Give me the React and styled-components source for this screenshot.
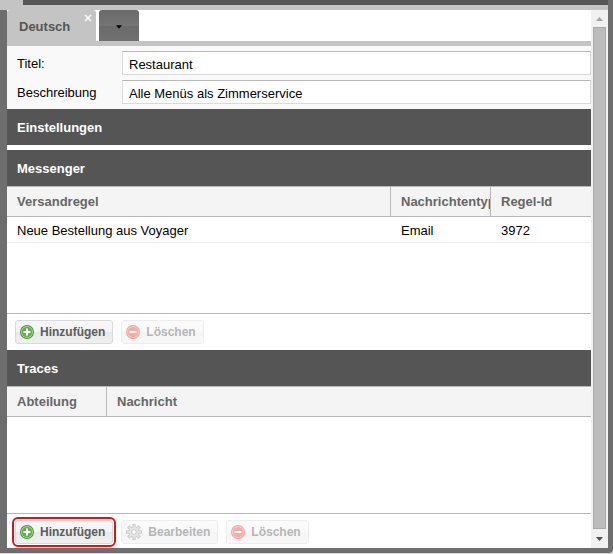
import React, { useState } from 'react'
import styled, { createGlobalStyle } from 'styled-components'

const GlobalStyle = createGlobalStyle`
  * { box-sizing:border-box }
  body {
    margin:0;
    background:#c4c4c4;
    color:#000;
    font:13px/16px "Liberation Sans", Arial, sans-serif;
  }
  button, input { font:inherit }
`

const Frame = styled.div`
  display:flex;
  min-height:100vh;
  padding-bottom:1px;
  background:#d6d6d6;
`
const LeftSide = styled.div`
  display:flex; flex:1; flex-direction:column;
  min-width:0;
`
const TopBar = styled.div`
  height:10px;
  border-bottom:5px solid #c4c4c4;
  border-left:23px solid #c4c4c4;
  background:#555;
`
const Window = styled.div`
  display:flex; flex:1;
  border-left:7px solid #6e6e6e;
  border-bottom:5px solid #6e6e6e;
`
const RightEdge = styled.div`
  width:5px;
  border-radius:0 0 4px 0;
  background:#6e6e6e;
`
const Content = styled.main`
  flex:1;
  min-width:0;
  background:#fff;
`

const TabBar = styled.div`
  display:flex;
  gap:3px;
  height:36px;
  border-bottom:5px solid #c4c4c4;
`
const Tab = styled.div`
  display:flex;
  width:89px; height:36px;
  border-radius:3px 3px 0 0;
  background:#c4c4c4;
`
const TabLabel = styled.button`
  flex:1;
  padding:0 0 3px 12px;
  border:0;
  background:none;
  color:#555;
  font-weight:bold;
  text-align:left;
`
const TabClose = styled.button`
  display:flex;
  align-self:flex-start;
  padding:4px 4px 0 0;
  border:0;
  background:none;
  color:#fff;
`
const TabMenu = styled.button`
  display:flex; align-items:center; justify-content:center;
  width:40px; height:31px;
  padding:2px 0 0;
  border:0;
  border-radius:3px 3px 0 0;
  background:linear-gradient(#6a6a6a, #757575 50%, #6b6b6b 51%, #707070);
`

const Form = styled.form`
  display:grid;
  grid-template-columns:105px 1fr;
  row-gap:5px;
  align-items:center;
  padding:5px 0 5px 10px;
  background:#f9f9f9;
`
const Label = styled.label`
  padding-top:2px;
`
const TextInput = styled.input`
  width:100%; height:24px;
  padding:3px 6px 0;
  border:1px solid #d9d9d9;
  border-top-color:#b9b9b9;
  border-radius:0;
  background:#fff;
  color:#000;
  outline:0;
`

const Panel = styled.section`
  margin-bottom:${({ $spaced }) => $spaced ? '5px' : '0'};
`
const PanelTitle = styled.h2`
  margin:0;
  padding:11px 10px 9px;
  background:#555;
  color:#fff;
  font-size:13px; line-height:16px;
`
const ListArea = styled.div`
  min-height:128px;
  border-bottom:1px solid #b9b9b9;
`
const Table = styled.table`
  width:100%;
  border-collapse:separate; border-spacing:0;
  table-layout:fixed;
  text-align:left;
`
const HeadCell = styled.th`
  width:${({ $width }) => $width || 'auto'};
  height:31px;
  padding:0 0 0 10px;
  border:solid #b9b9b9;
  border-width:1px 1px 1px 0;
  background:#f4f4f4;
  color:#666;
  overflow:hidden;
  white-space:nowrap;
  &:last-child { border-right:0 }
`
const Cell = styled.td`
  height:26px;
  padding:2px 0 0 10px;
  border-bottom:1px solid #ededed;
  white-space:nowrap;
`

const Toolbar = styled.div`
  display:flex;
  gap:8px;
  padding:6px 8px ${({ $bottom }) => $bottom || '6px'};
`
const ToolButton = styled.button`
  display:flex; align-items:center;
  gap:6px;
  height:24px;
  padding:0 7px 0 4px;
  border:1px solid #d9d9d9;
  border-radius:3px;
  background:linear-gradient(#f8f8f8, #f3f3f3 50%, #e9e9e9 51%, #f0f0f0);
  color:#5c5c5c;
  font-size:12px; font-weight:bold; line-height:14px;
  outline:${({ $marked }) => $marked ? '2px solid #d9141e' : '0'};
  outline-offset:1px;
  &:disabled { opacity:0.45 }
`

const ScrollBar = styled.div`
  display:flex; flex-direction:column;
  width:17px;
  background:#f1f1f1;
`
const ScrollButton = styled.button`
  display:flex; align-items:center; justify-content:center;
  height:${({ $height }) => $height};
  padding:0;
  border:0;
  background:none;
`
const ScrollThumb = styled.div`
  flex:1;
  margin:0 2px;
  border:1px solid #a8a8a8;
  background:#bcbcbc;
`

const Arrow = ({ up, color, size = 7 }) => (
  <svg width={size} height="4" viewBox="0 0 7 4" fill={color} aria-hidden="true">
    <path d={up ? 'M0 4h7L3.5 0z' : 'M0 0h7L3.5 4z'} />
  </svg>
)

const RoundIcon = ({ plus }) => (
  <svg width="14" height="14" viewBox="0 0 14 14" aria-hidden="true">
    <circle cx="7" cy="7" r="7" fill={plus ? '#4b8f40' : '#d5382d'} />
    <circle cx="7" cy="7" r="6" fill={plus ? '#b5dca6' : '#f8a49d'} />
    <circle cx="7" cy="7" r="5.3" fill={plus ? '#62b04f' : '#ee4a3e'} />
    <path d={plus ? 'M3.5 7h7M7 3.5v7' : 'M3.5 7h7'} stroke="#fff" strokeWidth="2" />
  </svg>
)

const GearIcon = () => (
  <svg width="16" height="16" viewBox="0 0 16 16" aria-hidden="true">
    <g stroke="#8a8a8a" strokeWidth="3.2">
      {[0, 45, 90, 135].map((angle) => (
        <path key={angle} d="M8 0v16" transform={`rotate(${angle} 8 8)`} />
      ))}
    </g>
    <circle cx="8" cy="8" r="5.6" fill="#8a8a8a" />
    <g stroke="#c6c6c6" strokeWidth="1.6">
      {[0, 45, 90, 135].map((angle) => (
        <path key={angle} d="M8 .9v14.2" transform={`rotate(${angle} 8 8)`} />
      ))}
    </g>
    <circle cx="8" cy="8" r="4.8" fill="#c6c6c6" />
    <circle cx="8" cy="8" r="2.3" fill="#fff" stroke="#8a8a8a" />
  </svg>
)

const rules = [
  { rule: 'Neue Bestellung aus Voyager', type: 'Email', id: '3972' },
]

const App = () => {
  const [title, setTitle] = useState('Restaurant')
  const [description, setDescription] = useState('Alle Menüs als Zimmerservice')

  return (
    <Frame>
      <GlobalStyle />
      <LeftSide>
        <TopBar />
        <Window>
          <Content>
            <TabBar>
              <Tab>
                <TabLabel type="button">Deutsch</TabLabel>
                <TabClose type="button" aria-label="Schließen">
                  <svg width="8" height="8" viewBox="0 0 8 8" stroke="currentColor" strokeWidth="1.4">
                    <path d="M1 1l6 6M7 1L1 7" />
                  </svg>
                </TabClose>
              </Tab>
              <TabMenu type="button" aria-label="Sprache wählen">
                <Arrow color="#000" size={6} />
              </TabMenu>
            </TabBar>

            <Form onSubmit={(e) => e.preventDefault()}>
              <Label htmlFor="title">Titel:</Label>
              <TextInput id="title" value={title} onChange={(e) => setTitle(e.target.value)} />
              <Label htmlFor="description">Beschreibung</Label>
              <TextInput id="description" value={description} onChange={(e) => setDescription(e.target.value)} />
            </Form>

            <Panel $spaced>
              <PanelTitle>Einstellungen</PanelTitle>
            </Panel>

            <Panel>
              <PanelTitle>Messenger</PanelTitle>
              <ListArea>
                <Table>
                  <thead>
                    <tr>
                      <HeadCell>Versandregel</HeadCell>
                      <HeadCell $width="100px">Nachrichtentyp</HeadCell>
                      <HeadCell $width="100px">Regel-Id</HeadCell>
                    </tr>
                  </thead>
                  <tbody>
                    {rules.map((item) => (
                      <tr key={item.id}>
                        <Cell>{item.rule}</Cell>
                        <Cell>{item.type}</Cell>
                        <Cell>{item.id}</Cell>
                      </tr>
                    ))}
                  </tbody>
                </Table>
              </ListArea>
              <Toolbar>
                <ToolButton type="button"><RoundIcon plus />Hinzufügen</ToolButton>
                <ToolButton type="button" disabled><RoundIcon />Löschen</ToolButton>
              </Toolbar>
            </Panel>

            <Panel>
              <PanelTitle>Traces</PanelTitle>
              <ListArea>
                <Table>
                  <thead>
                    <tr>
                      <HeadCell $width="100px">Abteilung</HeadCell>
                      <HeadCell>Nachricht</HeadCell>
                    </tr>
                  </thead>
                </Table>
              </ListArea>
              <Toolbar $bottom="4px">
                <ToolButton type="button" $marked><RoundIcon plus />Hinzufügen</ToolButton>
                <ToolButton type="button" disabled><GearIcon />Bearbeiten</ToolButton>
                <ToolButton type="button" disabled><RoundIcon />Löschen</ToolButton>
              </Toolbar>
            </Panel>
          </Content>

          <ScrollBar>
            <ScrollButton type="button" $height="17px" aria-label="Nach oben"><Arrow up color="#a3a3a3" /></ScrollButton>
            <ScrollThumb />
            <ScrollButton type="button" $height="19px" aria-label="Nach unten"><Arrow color="#505050" /></ScrollButton>
          </ScrollBar>
        </Window>
      </LeftSide>
      <RightEdge />
    </Frame>
  )
}

export default App
